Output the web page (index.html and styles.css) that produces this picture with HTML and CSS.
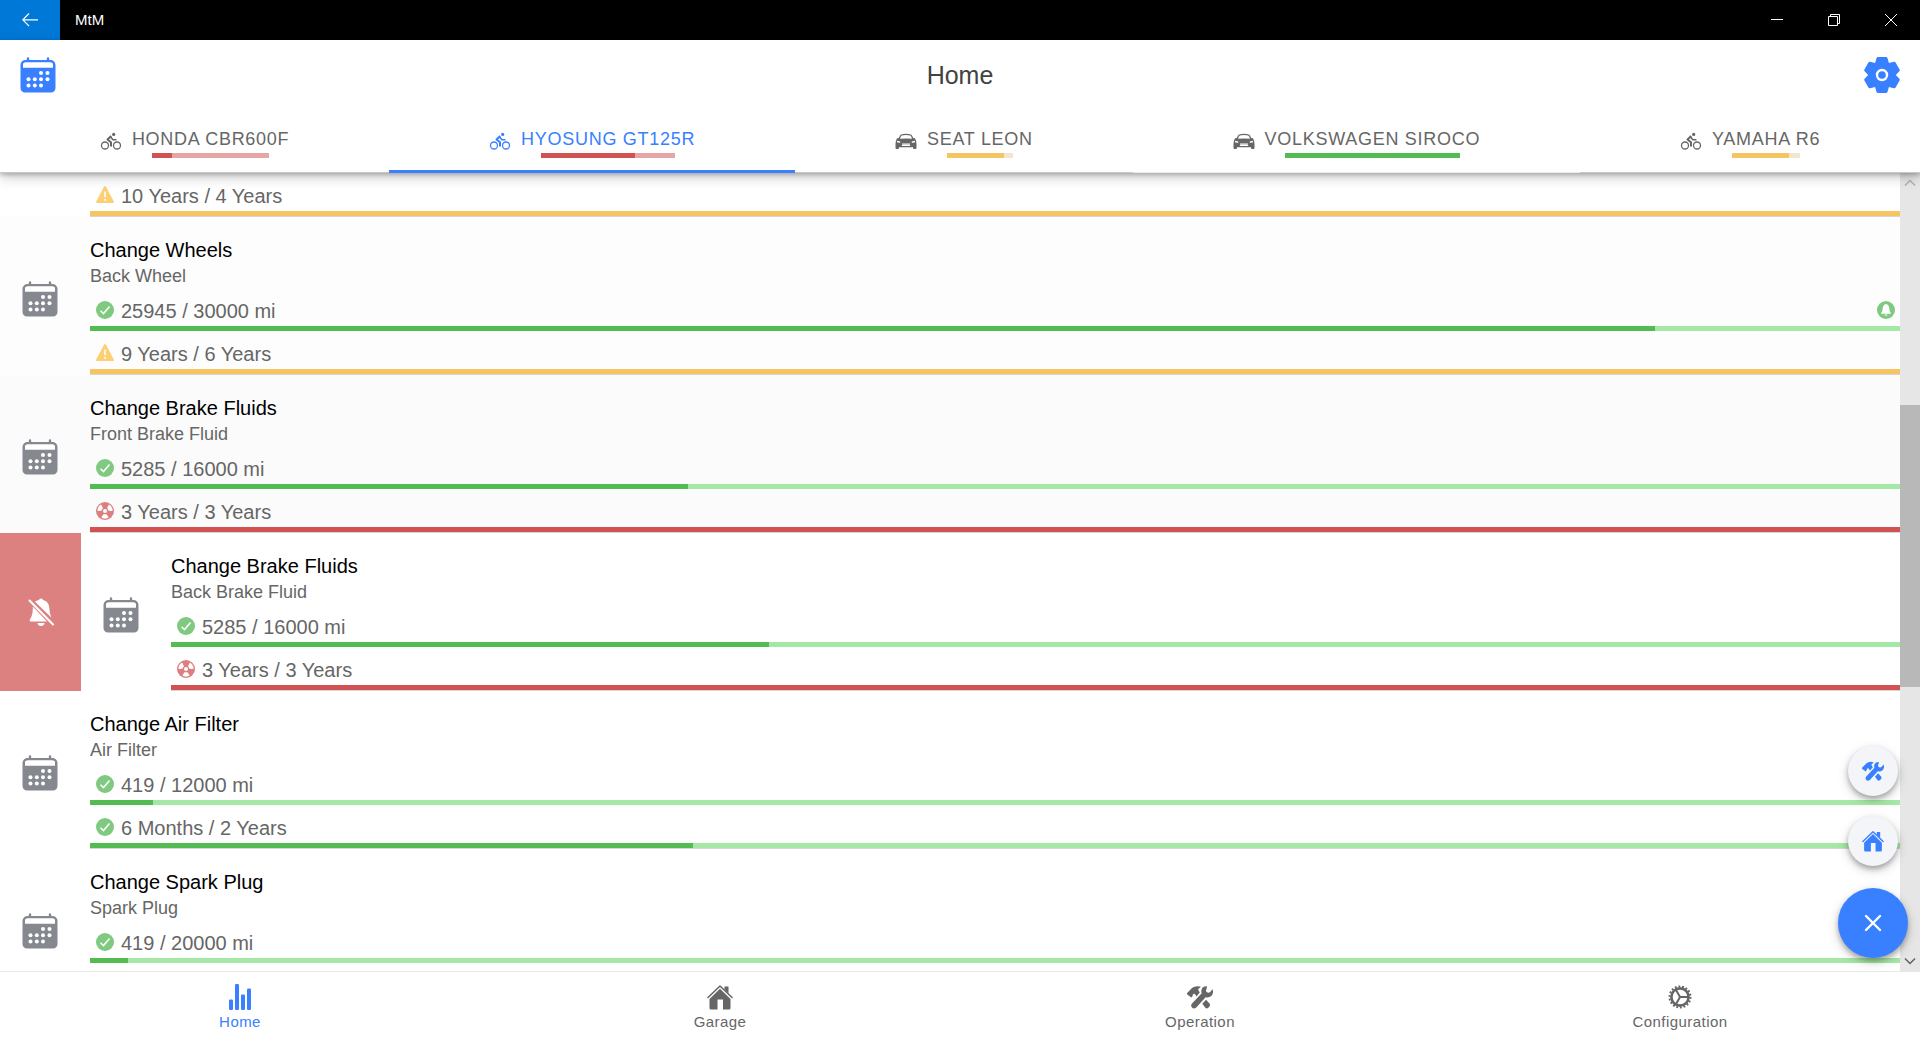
FILE: index.html
```html
<!DOCTYPE html>
<html lang="en">
<head>
<meta charset="utf-8">
<title>MtM</title>
<link rel="stylesheet" href="styles.css">
</head>
<body>
<svg class="sprite" aria-hidden="true">
  <symbol id="calendar" viewBox="-.5 0 36 36">
    <path fill="currentColor" fill-rule="evenodd" d="M6.300 1.500a1.200 1.200 0 0 1 2.400 0V3h17.600V1.500a1.200 1.200 0 0 1 2.400 0V3H30a5 5 0 0 1 5 5v23a4.500 4.500 0 0 1-4.500 4.500h-26A4.500 4.500 0 0 1 0 31V8a5 5 0 0 1 5-5h1.300zM5 5.500A2.500 2.500 0 0 0 2.500 8v2.500h30V8A2.500 2.500 0 0 0 30 5.500z"/>
    <g fill="#fff"><circle cx="20.500" cy="16" r="2"/><circle cx="27" cy="16" r="2"/><circle cx="8" cy="22.300" r="2"/><circle cx="14.300" cy="22.300" r="2"/><circle cx="20.500" cy="22.300" r="2"/><circle cx="27" cy="22.300" r="2"/><circle cx="8" cy="28.600" r="2"/><circle cx="14.300" cy="28.600" r="2"/><circle cx="20.500" cy="28.600" r="2"/></g>
    <path fill="#fff" d="M5 5.500h25A2.500 2.500 0 0 1 32.500 8v2.500h-30V8A2.500 2.500 0 0 1 5 5.500z"/>
  </symbol>
  <symbol id="gear" viewBox="-18 -18 36 36">
    <g fill="currentColor" stroke="currentColor" stroke-width="3" stroke-linejoin="round">
      <path id="lobe" d="M-4-16.500H4L5.500-11.500V11.500L4 16.500H-4L-5.500 11.500V-11.500Z"/>
      <use href="#lobe" transform="rotate(60)"/><use href="#lobe" transform="rotate(120)"/>
      <circle r="11.500"/>
    </g>
    <circle r="5" fill="none" stroke="#fff" stroke-width="2.400"/>
  </symbol>
  <symbol id="bike" viewBox="0 0 22 18">
    <g fill="none" stroke="currentColor" stroke-width="1.300"><circle cx="5" cy="13.500" r="3.500"/><circle cx="17" cy="13.500" r="3.500"/><path stroke-width="1.600" stroke-linejoin="round" d="M10.500 5l2.500 2.800h3.500"/><path stroke-width="2" stroke-linejoin="round" d="M11.200 4L7.500 7.500l3.500 2.700v4.300"/></g>
    <circle cx="13.700" cy="2.400" r="1.600" fill="currentColor"/>
  </symbol>
  <symbol id="car" viewBox="0 0 22 18">
    <path fill="currentColor" fill-rule="evenodd" d="M6 2.500Q11 1 16 2.500Q17.300 3 18.200 6L20 6.300Q21.500 9 21.500 12v4q0 1-1 1h-1.500q-1 0-1-1v-.7H4V16q0 1-1 1H1.500q-1 0-1-1v-4Q.5 9 2 6.300L3.800 6Q4.700 3 6 2.500zM6.600 3.600Q5.600 4.500 5 6.800q6-.8 12 0Q16.400 4.500 15.400 3.600Q11 2.600 6.600 3.600zM2 8.800v1.400l3.200.8V9.600zM20 8.800v1.400l-3.200.8V9.600zM7 11.500v1h8v-1zM6.500 14h9l-1-1.200h-7z"/>
  </symbol>
  <symbol id="warning" viewBox="0 0 18 18">
    <path fill="#fdcf73" d="M8 .8Q9-.6 10 .8L17.800 15.500Q18.300 17 17 17H1Q-.3 17 .2 15.500z"/><path stroke="#fff" stroke-width="1.600" d="M9 5.500v5.700M9 13v1.800"/>
  </symbol>
  <symbol id="check" viewBox="0 0 18 18">
    <circle cx="9" cy="9" r="9" fill="#80c980"/><path fill="none" stroke="#fff" stroke-width="1.500" d="M4.500 9.700l3 2.900L13.500 5.500"/>
  </symbol>
  <symbol id="nuclear" viewBox="0 0 18 18">
    <circle cx="9" cy="9" r="9" fill="#dd7f7f"/>
    <g fill="#fff"><circle cx="9" cy="9" r="2"/><path id="blade" d="M7.500 12.300h3l2.200 3.300Q9 17.800 5.300 15.600z"/><use href="#blade" transform="rotate(120 9 9)"/><use href="#blade" transform="rotate(240 9 9)"/></g>
  </symbol>
  <symbol id="reminder" viewBox="0 0 18 18">
    <circle cx="9" cy="9" r="9" fill="#80c980"/><path fill="#fff" d="M9 3Q12 3.500 12.300 7.500Q12.300 10.500 13.800 12v.7H4.200V12Q5.700 10.500 5.700 7.500Q6 3.500 9 3zM7.500 13.400h3q-.4 1.400-1.500 1.400t-1.500-1.400z"/>
  </symbol>
  <symbol id="bell-off" viewBox="0 0 26 28">
    <path fill="currentColor" d="M7 3.800Q9 2.300 11 2Q11 .5 13 .5T15 2Q21 3.300 21.300 10q.2 6 2 9.500zM4.800 8.500L19 23.500H2.500Q.8 22.500 2 21Q5 18 4.800 8.500zM9.500 25h7q-.5 3-3.500 3t-3.500-3z"/><path stroke="currentColor" stroke-width="2" stroke-linecap="round" d="M1.500 2.500l23.500 24"/>
  </symbol>
  <symbol id="stats" viewBox="0 0 26 26">
    <g fill="currentColor"><rect x="2" y="15.500" width="4" height="10.500" rx="1.200"/><rect x="8" width="4" height="26" rx="1.200"/><rect x="14" y="10.500" width="4" height="15.500" rx="1.200"/><rect x="20" y="4.500" width="4" height="21.500" rx="1.200"/></g>
  </symbol>
  <symbol id="house" viewBox="0 0 26 26">
    <path fill="none" stroke="currentColor" stroke-width="1.600" stroke-linejoin="round" stroke-linecap="round" d="M1 13.500L13 2l12 11.500"/>
    <path fill="currentColor" d="M17.500 2.500h4v6.800l-4-3.800zM13 4.700L23.500 15v9q0 1.500-1.500 1.500h-6v-10h-5.500v10H4Q2.500 25.500 2.500 24v-9z"/>
  </symbol>
  <symbol id="tools" viewBox="0 0 26 26">
    <path fill="currentColor" d="M.3 10.500Q-.4 9.700.4 8.800L5 4Q8.500 1.200 13.200 2.600Q14 3.200 13 3.700Q11 4.500 11.200 6L12.800 8.500L9.500 12.500L7.800 10Q6.700 9.200 6 10.300L5.200 12.800Q4.500 13.700 3.600 13zM15.300 19.700L19 15.700L22.500 19.500Q23.700 21 22.300 22.700L21 24Q19.500 25 18.300 23.700z"/>
    <path fill="currentColor" d="M20 2.300Q15.800 2 14.600 5.500Q14 7.500 14.700 9.300L5 19.500q-1.700 2.200 0 4t4.300 0L18.600 13.300q6 1 7.400-4.500Q26.200 6.800 25.400 5.300L23 8.300Q21 9.400 19.600 8Q18.400 6.500 19.500 5z"/>
  </symbol>
  <symbol id="cog" viewBox="0 0 26 26">
    <g fill="none" stroke="currentColor"><circle cx="13" cy="13" r="8.600" stroke-width="2.600"/><circle cx="13" cy="13" r="10.500" stroke-width="2" stroke-dasharray="1.830 1.830"/><path stroke-width="2" d="M12.500 13H22M13 13L8.500 5M13 13L8.500 21"/></g>
  </symbol>
</svg>

<header class="titlebar">
  <button class="back" aria-label="Back"><svg width="16" height="14" viewBox="0 0 16 14"><path fill="none" stroke="#fff" stroke-width="1.200" d="M7 .5L.8 6.800 7 13M1 6.800h15"/></svg></button>
  <span class="app-name">MtM</span>
  <button class="win" aria-label="Minimize"><svg width="12" height="12"><path stroke="#fff" d="M0 5.500h12"/></svg></button>
  <button class="win" aria-label="Restore"><svg width="12" height="12"><path fill="none" stroke="#fff" d="M.5 2.500h9v9h-9zM2.500 2V.5h9v9H10"/></svg></button>
  <button class="win" aria-label="Close"><svg width="12" height="12"><path stroke="#fff" d="M0 0l12 12M12 0L0 12"/></svg></button>
</header>

<div class="header">
  <div class="toolbar">
    <button aria-label="Calendar"><svg class="icon-lg"><use href="#calendar"/></svg></button>
    <h1>Home</h1>
    <button aria-label="Settings"><svg class="icon-lg"><use href="#gear"/></svg></button>
  </div>
  <div class="vehicles" role="tablist">
    <button class="vehicle" role="tab"><svg><use href="#bike"/></svg><span>HONDA CBR600F<span class="bar danger"><i style="width:17%"></i></span></span></button>
    <button class="vehicle selected" role="tab" aria-selected="true"><svg><use href="#bike"/></svg><span>HYOSUNG GT125R<span class="bar danger"><i style="width:70%"></i></span></span></button>
    <button class="vehicle" role="tab"><svg><use href="#car"/></svg><span>SEAT LEON<span class="bar warn"><i style="width:86%"></i></span></span></button>
    <button class="vehicle faint" role="tab"><svg><use href="#car"/></svg><span>VOLKSWAGEN SIROCO<span class="bar ok"><i style="width:100%"></i></span></span></button>
    <button class="vehicle" role="tab"><svg><use href="#bike"/></svg><span>YAMAHA R6<span class="bar warn"><i style="width:84%"></i></span></span></button>
  </div>
</div>

<main>
  <ul class="list">
    <li class="item partial">
      <div class="body">
        <div class="measure"><svg><use href="#warning"/></svg>10 Years / 4 Years</div><div class="bar warn"><i style="width:100%"></i></div>
      </div>
    </li>
    <li class="item shade-1">
      <svg class="icon-lg"><use href="#calendar"/></svg>
      <div class="body">
        <h2>Change Wheels</h2><p>Back Wheel</p>
        <div class="measure"><svg><use href="#check"/></svg>25945 / 30000 mi<svg class="end"><use href="#reminder"/></svg></div><div class="bar ok"><i style="width:86.480%"></i></div>
        <div class="measure"><svg><use href="#warning"/></svg>9 Years / 6 Years</div><div class="bar warn"><i style="width:100%"></i></div>
      </div>
    </li>
    <li class="item shade-2">
      <svg class="icon-lg"><use href="#calendar"/></svg>
      <div class="body">
        <h2>Change Brake Fluids</h2><p>Front Brake Fluid</p>
        <div class="measure"><svg><use href="#check"/></svg>5285 / 16000 mi</div><div class="bar ok"><i style="width:33.030%"></i></div>
        <div class="measure"><svg><use href="#nuclear"/></svg>3 Years / 3 Years</div><div class="bar danger"><i style="width:100%"></i></div>
      </div>
    </li>
    <li class="sliding">
      <button class="option" aria-label="Mute notification"><svg><use href="#bell-off"/></svg></button>
      <div class="item">
        <svg class="icon-lg"><use href="#calendar"/></svg>
        <div class="body">
          <h2>Change Brake Fluids</h2><p>Back Brake Fluid</p>
          <div class="measure"><svg><use href="#check"/></svg>5285 / 16000 mi</div><div class="bar ok"><i style="width:33.030%"></i></div>
          <div class="measure"><svg><use href="#nuclear"/></svg>3 Years / 3 Years</div><div class="bar danger"><i style="width:100%"></i></div>
        </div>
      </div>
    </li>
    <li class="item">
      <svg class="icon-lg"><use href="#calendar"/></svg>
      <div class="body">
        <h2>Change Air Filter</h2><p>Air Filter</p>
        <div class="measure"><svg><use href="#check"/></svg>419 / 12000 mi</div><div class="bar ok"><i style="width:3.490%"></i></div>
        <div class="measure"><svg><use href="#check"/></svg>6 Months / 2 Years</div><div class="bar ok"><i style="width:33.300%"></i></div>
      </div>
    </li>
    <li class="item last">
      <svg class="icon-lg"><use href="#calendar"/></svg>
      <div class="body">
        <h2>Change Spark Plug</h2><p>Spark Plug</p>
        <div class="measure"><svg><use href="#check"/></svg>419 / 20000 mi</div><div class="bar ok"><i style="width:2.100%"></i></div>
      </div>
    </li>
  </ul>
  <div class="scrollbar" aria-hidden="true">
    <svg class="dim" width="12" height="20"><path d="M1 12.500l5-5 5 5"/></svg>
    <div class="track"><div class="thumb"></div></div>
    <svg width="12" height="20"><path d="M1 7.500l5 5 5-5"/></svg>
  </div>
  <div class="fabs">
    <button class="fab small" aria-label="Operation"><svg><use href="#tools"/></svg></button>
    <button class="fab small" aria-label="Garage"><svg><use href="#house"/></svg></button>
    <button class="fab" aria-label="Close menu"><svg viewBox="0 0 24 24"><path stroke="#fff" stroke-width="2.400" stroke-linecap="round" d="M5 5l14 14M19 5L5 19"/></svg></button>
  </div>
</main>

<nav class="tabs">
  <a class="active" href="#home"><svg><use href="#stats"/></svg>Home</a>
  <a href="#garage"><svg><use href="#house"/></svg>Garage</a>
  <a href="#operation"><svg><use href="#tools"/></svg>Operation</a>
  <a href="#configuration"><svg><use href="#cog"/></svg>Configuration</a>
</nav>
</body>
</html>
```
FILE: styles.css
```css
* { box-sizing: border-box; }

body {
  margin: 0;
  height: 100vh;
  display: flex;
  flex-direction: column;
  overflow: hidden;
  background: #fff;
  color: #666;
  font-family: "Liberation Sans", Arial, sans-serif;
}

button {
  border: 0;
  padding: 0;
  background: none;
  color: inherit;
  font: inherit;
}

svg { display: block; flex: none; }
.sprite { position: absolute; width: 0; height: 0; }
.icon-lg { width: 36px; height: 36px; }

/* Window title bar */
.titlebar {
  flex: none;
  display: flex;
  align-items: stretch;
  height: 40px;
  padding-right: 1px;
  background: #000;
  color: #fff;
  font-size: 15px;
  line-height: 40px;
}
.titlebar button { display: flex; align-items: center; justify-content: center; }
.back { width: 60px; background: #0078d7; }
.app-name { flex: 1; padding-left: 15px; }
.win { width: 57px; }

/* Page header */
.header {
  flex: none;
  position: relative;
  z-index: 2;
  background: #fff;
  box-shadow: 0 2px 4px rgba(0, 0, 0, .2), 0 4px 12px rgba(0, 0, 0, .22);
}
.toolbar {
  display: flex;
  align-items: center;
  justify-content: space-between;
  height: 70px;
  padding: 0 20px;
  color: #3880ff;
}
.toolbar h1 { margin: 0; font-size: 25px; font-weight: 400; color: #424242; }

.vehicles { display: flex; }
.vehicle {
  position: relative;
  flex: 1 1 auto;
  display: flex;
  justify-content: center;
  gap: 10px;
  padding: 17px 0 15px;
  font-size: 18px;
  line-height: 24px;
  letter-spacing: 0.04em;
}
.vehicle::after {
  content: "";
  position: absolute;
  left: 0;
  right: 0;
  bottom: 0;
  height: 1px;
  background: #c8c8c8;
}
.vehicle.faint::after { background: #ebebeb; }
.vehicle.selected { color: #3880ff; }
.vehicle.selected::after { height: 3px; background: #3880ff; }
.vehicle svg { width: 22px; height: 18px; margin-top: 5px; }
.vehicle .bar { margin: 2px 20px 0; }

/* Progress bars */
.bar { display: block; height: 5px; }
.bar i { display: block; height: 100%; }
.ok { background: #a5e8a5; }
.ok i { background: #52bc52; }
.warn { background: #f3e6cc; }
.warn i { background: #f4c560; }
.danger { background: #e8a5a5; }
.danger i { background: #d05252; }

/* Maintenance list */
main {
  flex: 1;
  min-height: 0;
  position: relative;
  display: flex;
}
.list {
  flex: 1;
  min-width: 0;
  margin: 0;
  padding: 0;
  overflow: hidden;
  list-style: none;
}
.item { display: flex; gap: 32px; padding-left: 22px; background: #fff; }
.item > .icon-lg { margin-top: 64px; color: #86888f; }
.item.partial { padding-left: 90px; }
.shade-1 { background: #fdfdfd; }
.shade-2 { background: #fbfbfb; }
.body { flex: 1; padding-top: 21px; border-bottom: 1px solid #d6d6d6; }
.partial .body { padding-top: 0; }
.last .body { border: 0; }
.body h2 { margin: 0 0 2px; font-size: 20px; line-height: 24px; font-weight: 400; color: #000; }
.body p { margin: 0; font-size: 18px; line-height: 24px; }
.measure {
  display: flex;
  align-items: center;
  gap: 7px;
  padding: 8px 5px 0 6px;
  font-size: 20px;
  line-height: 30px;
}
.measure svg { width: 18px; height: 18px; margin-bottom: 2px; }
.measure .end { margin-left: auto; }

.sliding { display: flex; overflow: hidden; }
.sliding .item { flex: 0 0 100%; }
.option {
  flex: 0 0 81px;
  display: flex;
  align-items: center;
  justify-content: center;
  background: #dc8080;
  color: #fff;
}
.option svg { width: 26px; height: 28px; }

.scrollbar {
  flex: 0 0 20px;
  display: flex;
  flex-direction: column;
  align-items: center;
  background: #e6e6e6;
}
.scrollbar path { fill: none; stroke: #606060; stroke-width: 1.500; }
.scrollbar .dim path { stroke: #b0b0b0; }
.track { flex: 1; width: 100%; padding-top: 212px; }
.thumb { height: 37%; min-height: 282px; background: #b8b8b8; }

/* Floating buttons */
.fabs {
  position: absolute;
  right: 12px;
  bottom: 13px;
  display: flex;
  flex-direction: column;
  align-items: center;
  gap: 20px;
}
.fab {
  display: flex;
  align-items: center;
  justify-content: center;
  width: 70px;
  height: 70px;
  border-radius: 50%;
  background: #3880ff;
  box-shadow: 0 3px 5px rgba(0, 0, 0, .25), 0 4px 12px rgba(0, 0, 0, .18);
}
.fab svg { width: 24px; height: 24px; }
.fab.small { width: 50px; height: 50px; background: #f4f5f8; color: #3880ff; }
.fab.small + .fab:not(.small) { margin-top: 2px; }
.fab.small svg { width: 22px; height: 22px; }

/* Bottom navigation */
.tabs { flex: none; display: flex; height: 71px; border-top: 1px solid #e8e8e8; }
.tabs a {
  flex: 1;
  display: flex;
  flex-direction: column;
  align-items: center;
  gap: 2px;
  padding-top: 12px;
  color: #666;
  font-size: 15px;
  line-height: 20px;
  letter-spacing: 0.03em;
  text-decoration: none;
}
.tabs a.active { color: #3880ff; }
.tabs svg { width: 26px; height: 26px; }
```
